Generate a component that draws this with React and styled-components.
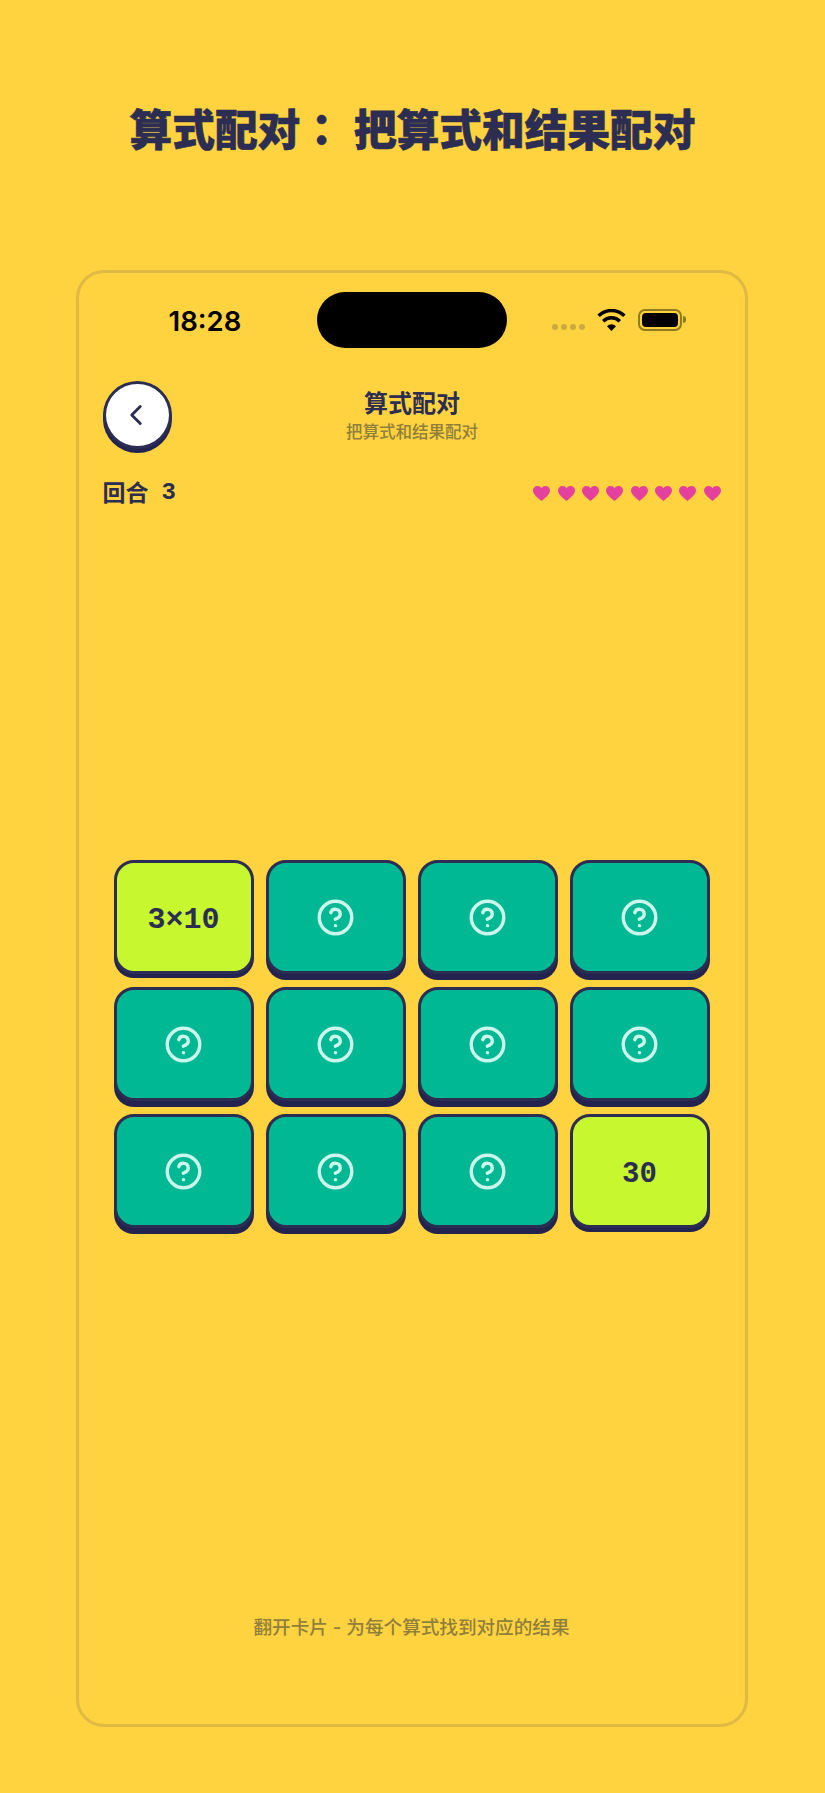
import React from "react";
import styled, { createGlobalStyle } from "styled-components";
import { CircleHelp, ChevronLeft } from "lucide-react";

const navy = "#2b2d52";
const shadow = "#23234f";
const cjk = '"Inter", "Noto Sans CJK SC", sans-serif';

const Global = createGlobalStyle`
  html, body { margin: 0; padding: 0; background: #ffd23f; }
  * { box-sizing: border-box; }
`;

const Page = styled.div`
  width: 825px;
  height: 1793px;
  background: #ffd23f;
  display: flex;
  flex-direction: column;
  align-items: center;
  padding-top: 93px;
  font-family: ${cjk};
`;

const Heading = styled.h1`
  margin: 0;
  height: 70px;
  font-size: 42.7px;
  line-height: 68px;
  font-weight: 900;
  color: ${navy};
  white-space: nowrap;
  font-family: "Noto Sans CJK SC", sans-serif;
  -webkit-text-stroke: 0.6px ${navy};
`;

const Colon = styled.span`
  font-family: "Noto Sans CJK TC", sans-serif;
  margin-right: 11px;
`;

const Frame = styled.div`
  margin-top: 107px;
  margin-left: -2px;
  width: 672px;
  height: 1457px;
  border: 3px solid #dfb944;
  border-radius: 28px;
  display: flex;
  flex-direction: column;
`;

const StatusBar = styled.div`
  height: 56px;
  margin-top: 19px;
  position: relative;
  display: flex;
  align-items: center;
  justify-content: space-between;
  padding: 0 63px 0 90px;
`;

const Time = styled.div`
  font-size: 27.5px;
  font-weight: 600;
  color: #000;
  padding-top: 2px;
  font-family: "Inter", sans-serif;
`;

const Island = styled.div`
  position: absolute;
  left: 238px;
  top: 0;
  width: 190px;
  height: 56px;
  border-radius: 28px;
  background: #000;
`;

const Indicators = styled.div`
  display: flex;
  align-items: center;
  gap: 12px;
`;

const Dots = styled.div`
  display: flex;
  gap: 3px;
  margin-top: 14px;
`;

const Dot = styled.span`
  width: 6px;
  height: 6px;
  border-radius: 50%;
  background: #c9aa3f;
`;

const Battery = styled.div`
  width: 44px;
  height: 22px;
  border: 2px solid #8f7a20;
  border-radius: 7px;
  padding: 2px;
  position: relative;
  &::before {
    content: "";
    display: block;
    height: 100%;
    width: 100%;
    background: #000;
    border-radius: 4px;
  }
  &::after {
    content: "";
    position: absolute;
    right: -6px;
    top: 5px;
    width: 3px;
    height: 7px;
    background: #8f7a20;
    border-radius: 0 3px 3px 0;
  }
`;

const Header = styled.div`
  margin-top: 33px;
  padding: 0 24px;
  position: relative;
  height: 72px;
  display: flex;
  align-items: flex-start;
`;

const BackButton = styled.button`
  width: 69px;
  height: 68px;
  padding: 0 2px 0 0;
  border-radius: 50%;
  border: 3px solid ${navy};
  background: #fff;
  color: ${navy};
  box-shadow: 0 4px 0 ${shadow};
  display: flex;
  align-items: center;
  justify-content: center;
`;

const TitleBlock = styled.div`
  position: absolute;
  left: 1px;
  right: 0;
  top: 7px;
  text-align: center;
`;

const Title = styled.div`
  font-size: 24px;
  line-height: 32px;
  font-weight: 700;
  color: ${navy};
`;

const Subtitle = styled.div`
  font-size: 16.5px;
  line-height: 24px;
  color: #8f7f3c;
  font-weight: 500;
`;

const InfoRow = styled.div`
  margin-top: 24px;
  padding: 0 24px;
  height: 32px;
  display: flex;
  align-items: center;
  justify-content: space-between;
`;

const Round = styled.div`
  font-size: 23px;
  line-height: 32px;
  height: 32px;
  font-weight: 700;
  color: ${navy};
  display: flex;
  gap: 13px;
`;

const Mono = styled.span`
  font-family: "Liberation Mono", monospace;
  font-weight: 700;
  font-size: 24px;
  line-height: 32px;
`;

const Hearts = styled.div`
  display: flex;
  gap: 7.3px;
`;

const Board = styled.div`
  flex: 1;
  display: flex;
  flex-direction: column;
  align-items: center;
  padding-top: 351px;
`;

const Grid = styled.div`
  display: grid;
  grid-template-columns: repeat(4, 140px);
  grid-auto-rows: 114px;
  gap: 13px 12px;
`;

const Card = styled.div`
  border: 3px solid ${navy};
  border-radius: 20px;
  background: ${(p) => (p.$open ? "#c6f72f" : "#00b894")};
  box-shadow: 0 ${(p) => (p.$open ? "4px" : "6px")} 0 ${shadow};
  display: flex;
  align-items: center;
  justify-content: center;
  color: #cdf7ec;
`;

const CardText = styled.span`
  font-family: "Liberation Mono", monospace;
  font-weight: 700;
  font-size: ${(p) => p.$size}px;
  color: ${navy};
  padding-top: 6px;
`;

const Footer = styled.div`
  height: 109px;
  text-align: center;
  font-size: 18.6px;
  line-height: 24px;
  font-weight: 500;
  color: #8f7f3c;
`;

const Heart = () => (
  <svg width="17" height="15" viewBox="0 0 17 15">
    <path
      d="M8.5 15C6.6 13.3 0 9.2 0 4.6 0 2 2 0 4.5 0 6.2 0 7.7.9 8.5 2.3 9.3.9 10.8 0 12.5 0 15 0 17 2 17 4.6 17 9.2 10.4 13.3 8.5 15Z"
      fill="#e5409d"
    />
  </svg>
);

const Wifi = () => (
  <svg width="29" height="22" viewBox="0 0 29 22">
    <path d="M14.5 22 10 17.2a6.4 6.4 0 0 1 9 0Z" fill="#000" />
    <path
      d="M6.2 12.2a11.8 11.8 0 0 1 16.6 0M1.6 6.8a18.4 18.4 0 0 1 25.8 0"
      fill="none"
      stroke="#000"
      strokeWidth="3.4"
    />
  </svg>
);

const cards = [
  "3×10", 0, 0, 0,
  0, 0, 0, 0,
  0, 0, 0, "30",
];

export default function App() {
  return (
    <Page>
      <Global />
      <Heading>
        算式配对<Colon>：</Colon>把算式和结果配对
      </Heading>
      <Frame>
        <StatusBar>
          <Time>18:28</Time>
          <Island />
          <Indicators>
            <Dots>
              <Dot />
              <Dot />
              <Dot />
              <Dot />
            </Dots>
            <Wifi />
            <Battery />
          </Indicators>
        </StatusBar>
        <Header>
          <BackButton aria-label="返回">
            <ChevronLeft size={34} strokeWidth={2} />
          </BackButton>
          <TitleBlock>
            <Title>算式配对</Title>
            <Subtitle>把算式和结果配对</Subtitle>
          </TitleBlock>
        </Header>
        <InfoRow>
          <Round>
            <span>回合</span>
            <Mono>3</Mono>
          </Round>
          <Hearts>
            {Array.from({ length: 8 }, (_, i) => (
              <Heart key={i} />
            ))}
          </Hearts>
        </InfoRow>
        <Board>
          <Grid>
            {cards.map((c, i) =>
              c ? (
                <Card key={i} $open>
                  <CardText $size={c.length > 2 ? 30 : 29}>{c}</CardText>
                </Card>
              ) : (
                <Card key={i}>
                  <CircleHelp size={39} strokeWidth={2.1} />
                </Card>
              )
            )}
          </Grid>
        </Board>
        <Footer>翻开卡片 - 为每个算式找到对应的结果</Footer>
      </Frame>
    </Page>
  );
}
